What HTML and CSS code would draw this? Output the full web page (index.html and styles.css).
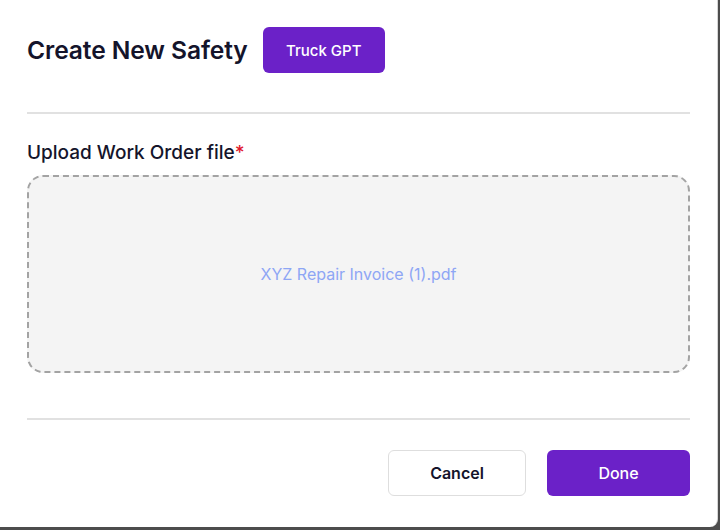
FILE: index.html
```html
<!DOCTYPE html>
<html>
<head>
<meta charset="utf-8">
<link rel="stylesheet" href="styles.css">
</head>
<body>
  <div class="modal">
    <div class="modal-head">
      <h1 class="modal-title">Create New Safety</h1>
      <button class="btn btn-primary btn-gpt">Truck GPT</button>
    </div>
    <hr class="divider">
    <label class="field-label">Upload Work Order file<span class="req">*</span></label>
    <div class="dropzone">
      <span class="file-name">XYZ Repair Invoice (1).pdf</span>
    </div>
    <hr class="divider divider-foot">
    <div class="modal-foot">
      <button class="btn btn-outline">Cancel</button>
      <button class="btn btn-primary btn-done">Done</button>
    </div>
  </div>
</body>
</html>
```

FILE: styles.css
```css
html, body
{
  margin: 0;
  padding: 0;
  height: 100%;
  background-color: #4d4d4d;
  font-family: Inter, "Noto Sans", sans-serif;
}

.modal
{
  box-sizing: border-box;
  width: 718px;
  height: 527px;
  padding: 27px 27px 0 27px;
  background-color: #fff;
  border-right: 1px solid #d6d6d6;
  border-bottom-right-radius: 8px;
}

.modal-head
{
  display: flex;
  align-items: center;
  gap: 15px;
}

.modal-title
{
  margin: 0;
  font-size: 24.6px;
  font-weight: 600;
  color: #14142b;
  letter-spacing: -0.1px;
}

.divider
{
  margin: 39px 0 0 0;
  border: none;
  height: 2px;
  background-color: #e1e1e1;
}

.divider-foot { margin-top: 45px; }

.field-label
{
  display: block;
  margin-top: 28px;
  font-size: 19px;
  line-height: 22px;
  font-weight: 500;
  color: #14142b;
  letter-spacing: 0;
}

.req { color: #e0192d; }

.dropzone
{
  box-sizing: border-box;
  height: 198px;
  margin-top: 11px;
  display: flex;
  align-items: center;
  justify-content: center;
  background-color: #f4f4f4;
  border: 2px dashed #a3a3a3;
  border-radius: 16px;
}

.file-name
{
  font-size: 16px;
  color: #8ea6f4;
  margin-bottom: 1px;
}

.modal-foot
{
  display: flex;
  justify-content: flex-end;
  gap: 21px;
  margin-top: 30px;
}

.btn
{
  font-family: inherit;
  height: 46px;
  border-radius: 6px;
  cursor: pointer;
}

.btn-primary
{
  background-color: #6b21c8;
  border: none;
  color: #fff;
}

.btn-gpt
{
  width: 122px;
  font-size: 15px;
  font-weight: 500;
}

.btn-outline
{
  width: 138px;
  background-color: #fff;
  border: 1px solid #dedede;
  color: #14142b;
  font-size: 16px;
  font-weight: 600;
}

.btn-done
{
  width: 143px;
  font-size: 16px;
  font-weight: 500;
}
```
